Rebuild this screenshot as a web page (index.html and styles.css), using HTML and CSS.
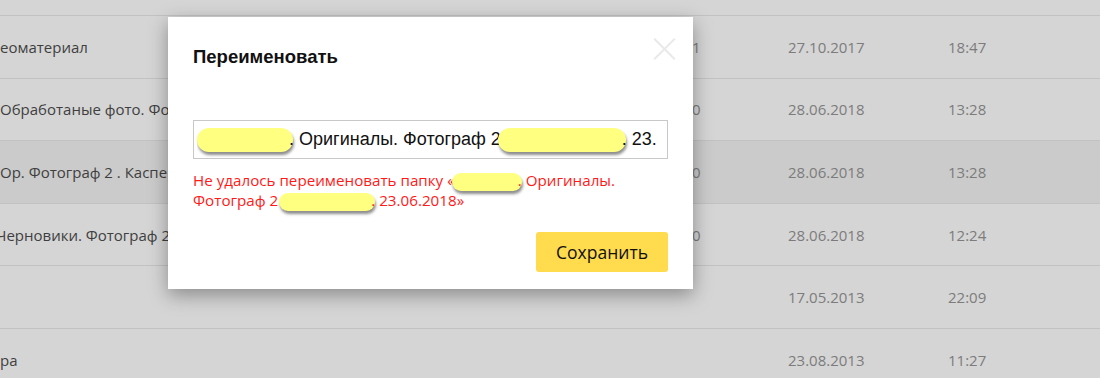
FILE: index.html
```html
<!DOCTYPE html>
<html lang="ru">
<head>
  <meta charset="UTF-8" />
  <title>Переименовать</title>
  <link rel="stylesheet" href="styles.css">
</head>
<body>
  <div class="lista">
    <div class="cabeza"></div>
    <div class="fila">
      <div class="nombre">еоматериал</div><div class="num">1</div><div class="fecha">27.10.2017</div><div class="hora">18:47</div>
    </div>
    <div class="fila">
      <div class="nombre">Обработаные фото. Фотограф 2</div><div class="num">0</div><div class="fecha">28.06.2018</div><div class="hora">13:28</div>
    </div>
    <div class="fila activa">
      <div class="nombre">Ор. Фотограф 2 . Каспер</div><div class="num">0</div><div class="fecha">28.06.2018</div><div class="hora">13:28</div>
    </div>
    <div class="fila">
      <div class="nombre corte">Черновики. Фотограф 2</div><div class="num">0</div><div class="fecha">28.06.2018</div><div class="hora">12:24</div>
    </div>
    <div class="fila">
      <div class="nombre"></div><div class="num"></div><div class="fecha">17.05.2013</div><div class="hora">22:09</div>
    </div>
    <div class="fila">
      <div class="nombre">ра</div><div class="num"></div><div class="fecha">23.08.2013</div><div class="hora">11:27</div>
    </div>
  </div>

  <div class="dialogo">
    <span class="cerrar"></span>
    <h2>Переименовать</h2>
    <div class="campo">
      <div class="texto"><span class="tapa t1"></span>. Оригиналы. Фотограф 2 <span class="tapa t2"></span>. 23.06.2018</div>
    </div>
    <p class="error">Не удалось переименовать папку «<span class="tapa t3"></span>. Оригиналы.<br>Фотограф 2 <span class="tapa t4"></span>. 23.06.2018»</p>
    <div class="pie">
      <button class="guardar">Сохранить</button>
    </div>
  </div>
</body>
</html>
```

FILE: styles.css
```css
* { box-sizing: border-box; margin: 0; padding: 0; }
body {
  font-family: 'Open Sans', sans-serif;
  background: #d5d5d5;
  width: 1100px; height: 378px; overflow: hidden;
  position: relative;
}
.cabeza { height: 16px; border-bottom: 1px solid #c2c2c2; }
.fila {
  display: grid;
  grid-template-columns: 690px 98px 160px 1fr;
  align-items: center;
  height: 62.6px;
  border-bottom: 1px solid #c2c2c2;
  font-size: 15px;
  color: #7c7c7c;
}
.fila.activa { background: #cbcbcb; }
.nombre { color: #3f3f3f; white-space: nowrap; overflow: hidden; }
.corte { text-indent: -4px; }
.num { padding-left: 2px; }

.dialogo {
  position: absolute; left: 168px; top: 17px;
  width: 525px; height: 272px;
  background: #fff;
  box-shadow: 0 6px 18px rgba(0,0,0,0.35);
  padding: 27px 25px 20px 25px;
  font-family: 'Liberation Sans', Arial, sans-serif;
}
.dialogo h2 { font-size: 18.5px; font-weight: bold; color: #111; line-height: 26px; }
.cerrar {
  position: absolute; right: 18px; top: 21px;
  width: 22px; height: 22px;
}
.cerrar::before, .cerrar::after {
  content: ""; position: absolute; left: -3px; top: 10px;
  width: 29px; height: 2px; background: #e9e9e9;
  transform: rotate(45deg);
}
.cerrar::after { transform: rotate(-45deg); }
.campo {
  margin-top: 50px;
  height: 39px;
  border: 1px solid #c8c8c8;
  padding: 0 10px 0 3px;
  font-size: 18px; line-height: 37px; color: #111;
}
.texto { white-space: nowrap; overflow: hidden; }
.tapa {
  display: inline-block; vertical-align: middle;
  background: #ffff80; border-radius: 12px;
  box-shadow: 1px 3px 3px rgba(0,0,0,0.45);
  height: 24px;
}
.t1 { width: 96px; margin-right: -4px; }
.t2 { width: 128px; margin-left: -8px; margin-right: -4px; }
.error {
  margin-top: 12px;
  font-family: 'Open Sans', sans-serif;
  font-size: 15.2px; line-height: 18px; color: #ff1a1a;
}
.t3 { width: 70px; height: 18px; margin: 0 -4px 0 -3px; }
.t4 { width: 96px; height: 18px; margin: 0 -4px 0 -3px; }
.pie { display: flex; justify-content: flex-end; margin-top: 21px; }
.guardar {
  background: #ffdb4d; border: none; border-radius: 3px;
  width: 132px; height: 40px;
  font-family: 'Open Sans', sans-serif; font-size: 17.5px; color: #111;
}
```
